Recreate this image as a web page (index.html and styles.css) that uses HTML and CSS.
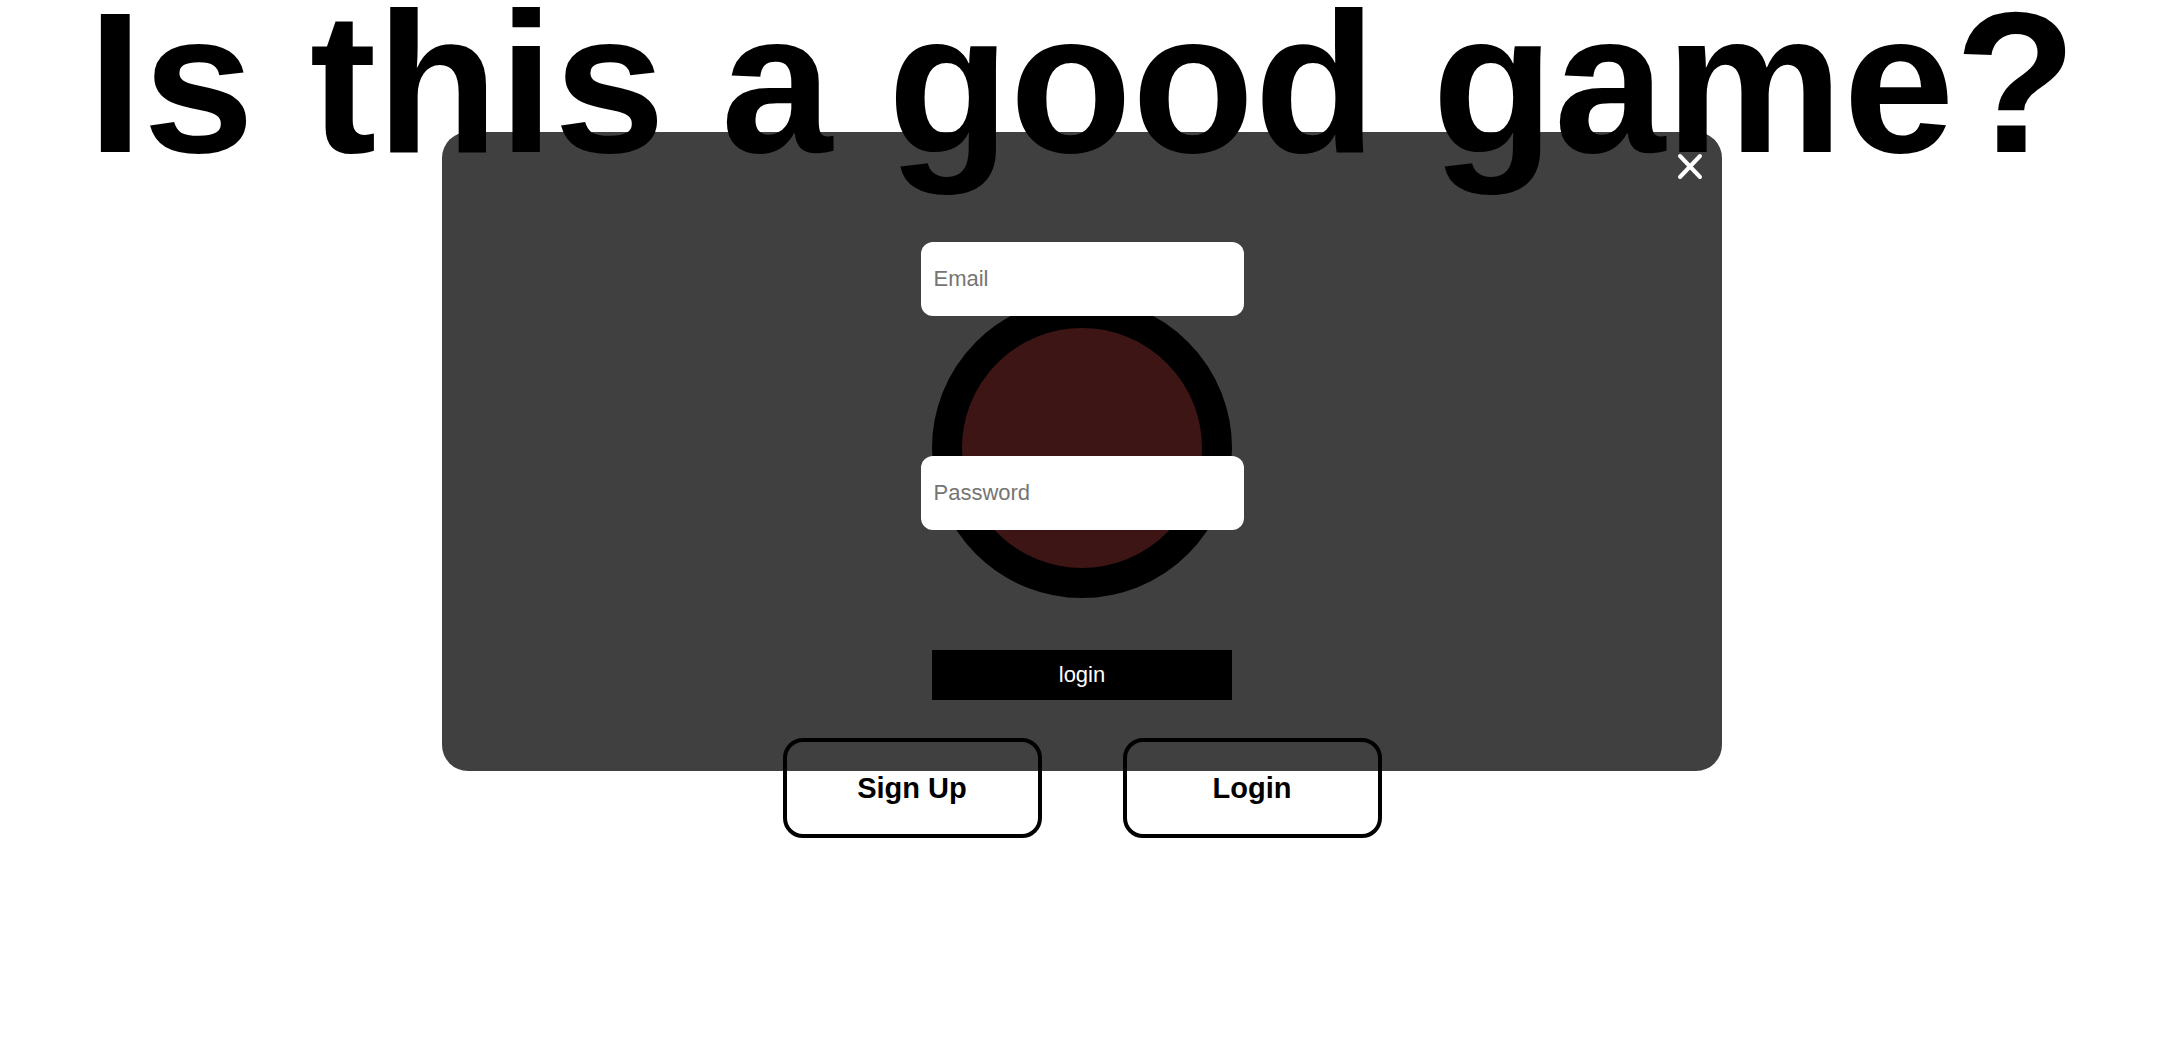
FILE: index.html
```
<!DOCTYPE html>
<html lang="en">
<head>
<meta charset="utf-8">
<title>Is this a good game?</title>
<link rel="stylesheet" href="styles.css">
</head>
<body>
<div class="page">
  <h1 class="title">Is this a good game?</h1>
  <div class="actions">
    <button class="action-btn" type="button">Sign Up</button>
    <button class="action-btn" type="button">Login</button>
  </div>

  <div class="modal">
    <button class="close-btn" type="button" aria-label="Close">
      <svg width="26" height="27" viewBox="0 0 26 27"><path d="M3 3 L23 24 M23 3 L3 24" stroke="#fff" stroke-width="4" stroke-linecap="round" fill="none"/></svg>
    </button>
    <form class="login-form">
      <input class="field" type="email" placeholder="Email">
      <div class="orb"></div>
      <input class="field field-password" type="password" placeholder="Password">
      <button class="submit-btn" type="button">login</button>
    </form>
  </div>
</div>
</body>
</html>
```

FILE: styles.css
```
html, body {
  margin: 0;
  padding: 0;
  background: #ffffff;
}

body {
  font-family: "Liberation Sans", Arial, sans-serif;
  color: #000;
}

.page {
  position: relative;
  width: 2164px;
  min-height: 1046px;
}

.title {
  position: relative;
  z-index: 2;
  margin: 0;
  font-size: 200px;
  font-weight: 700;
  line-height: 165px;
  text-align: center;
  white-space: nowrap;
}

.actions {
  position: relative;
  z-index: 2;
  display: flex;
  justify-content: center;
  gap: 81px;
  margin-top: 573px;
}

.action-btn {
  width: 259px;
  height: 100px;
  box-sizing: border-box;
  border: 4px solid #000;
  border-radius: 20px;
  background: transparent;
  font-family: "Liberation Sans", Arial, sans-serif;
  font-weight: 700;
  font-size: 29px;
  color: #000;
  padding: 0;
}

.modal {
  position: absolute;
  z-index: 1;
  left: 442px;
  top: 132px;
  width: 1280px;
  height: 639px;
  background: #404040;
  border-radius: 26px;
}

.close-btn {
  position: absolute;
  top: 21px;
  right: 19px;
  width: 26px;
  height: 27px;
  padding: 0;
  border: none;
  background: transparent;
  display: block;
}

.close-btn svg {
  display: block;
}

.login-form {
  display: flex;
  flex-direction: column;
  align-items: center;
  padding-top: 110px;
  margin: 0;
}

.field {
  position: relative;
  z-index: 1;
  width: 323px;
  height: 74px;
  box-sizing: border-box;
  border: none;
  border-radius: 12px;
  background: #fff;
  padding: 0 13px;
  font-family: "Liberation Sans", Arial, sans-serif;
  font-size: 22px;
  color: #000;
  outline: none;
}

.field::placeholder {
  color: #757575;
}

.orb {
  width: 300px;
  height: 300px;
  box-sizing: border-box;
  margin-top: -18px;
  border: 30px solid #000;
  border-radius: 50%;
  background: #3e1515;
}

.field-password {
  margin-top: -142px;
}

.submit-btn {
  margin-top: 120px;
  width: 300px;
  height: 50px;
  border: none;
  background: #000;
  color: #fff;
  font-family: "Liberation Sans", Arial, sans-serif;
  font-size: 22px;
  padding: 0;
}
```
